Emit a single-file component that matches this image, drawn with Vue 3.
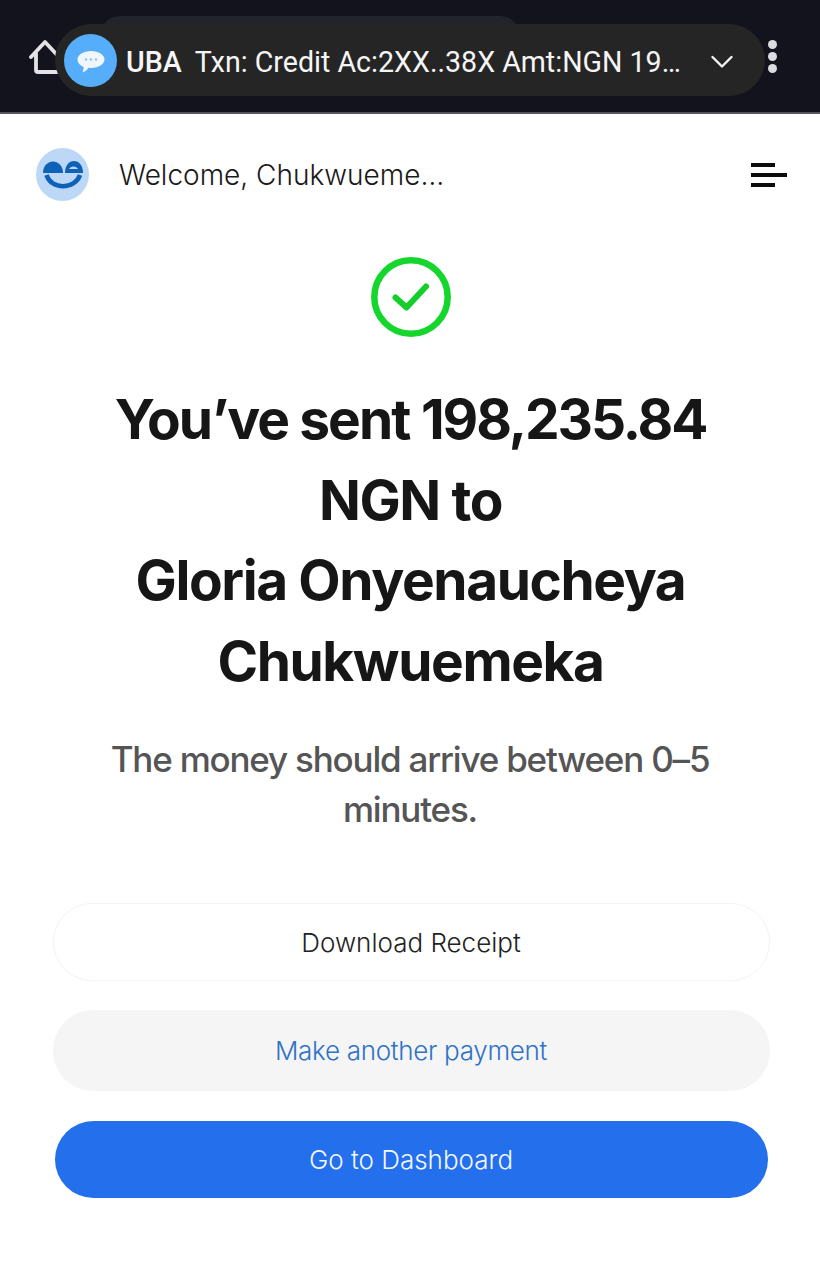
<template>
  <div class="screen">
    <!-- status bar, with the notification pill over it -->
    <div class="status-bar">
      <div class="pill-behind"></div>
      <svg class="home-icon" viewBox="0 0 32 36" width="32" height="36">
        <path d="M2 19 L16 4 L30 19 M7 15 V32 Q7 34 9 34 H30" fill="none" stroke="#e4e2e8" stroke-width="3.800" stroke-linecap="round" stroke-linejoin="round" />
      </svg>
      <div class="notif">
        <div class="notif-icon">
          <svg viewBox="0 0 30 30" width="30" height="30">
            <path d="M15 6 C22.500 6 28.500 9.800 28.500 14.500 C28.500 19.200 22.500 23 15 23 C14 23 13.200 22.900 12.400 22.800 C11 25.300 8.800 27 6.300 27.500 C7.300 25.800 7.700 23.900 7.500 21.800 C3.900 20.300 1.500 17.600 1.500 14.500 C1.500 9.800 7.500 6 15 6 Z" fill="#f1f6fb" />
            <circle cx="10" cy="14.500" r="1.200" fill="#8fc4f2" />
            <circle cx="15" cy="14.500" r="1.200" fill="#8fc4f2" />
            <circle cx="20" cy="14.500" r="1.200" fill="#8fc4f2" />
          </svg>
        </div>
        <span class="notif-sender">UBA</span>
        <span class="notif-text">Txn: Credit Ac:2XX..38X Amt:NGN 19…</span>
        <svg class="chevron" viewBox="0 0 22 14" width="22" height="14">
          <path d="M1.500 2 L11 11.500 L20.500 2" fill="none" stroke="#f2f2f2" stroke-width="2.400" stroke-linecap="round" stroke-linejoin="round" />
        </svg>
      </div>
      <div class="dots">
        <span></span>
        <span></span>
        <span></span>
      </div>
    </div>

    <div class="header">
      <div class="user">
        <div class="avatar">
          <svg viewBox="0 0 53 53" width="53" height="53">
            <path d="M7 25 C7 17.500 12 13.500 17 13.500 C22 13.500 27 17.500 27 25 Z" fill="#0d62b8" />
            <path d="M29 25 C29 17.500 33 13 38 13 C43 13 47 17.500 47 25 Z" fill="#0d62b8" />
            <path d="M33 21 C34.500 17.500 40.500 17.500 42 21 Z" fill="#bcd8f6" />
            <path d="M10.500 27 C15 42 39 42 44 27" fill="none" stroke="#0d62b8" stroke-width="4.500" />
          </svg>
        </div>
        <span class="welcome">Welcome, Chukwueme…</span>
      </div>
      <div class="menu">
        <span class="short"></span>
        <span class="long"></span>
        <span class="short"></span>
      </div>
    </div>

    <div class="content">
      <svg class="check" viewBox="0 0 80 80" width="80" height="80">
        <circle cx="40" cy="40" r="36.700" fill="none" stroke="#14d62c" stroke-width="6.500" />
        <path d="M24.500 40.500 L35.500 50.500 L55 29.500" fill="none" stroke="#14cf2b" stroke-width="6" stroke-linecap="round" stroke-linejoin="round" />
      </svg>

      <h1 class="title">
        <div><span class="sent">You’ve sent</span> <span class="amount">198,235.84</span></div>
        <div>NGN to</div>
        <div>Gloria Onyenaucheya</div>
        <div>Chukwuemeka</div>
      </h1>

      <p class="subtitle">
        <span>The money should arrive between 0–5</span>
        <span>minutes.</span>
      </p>

      <div class="actions">
        <button class="btn btn-outline">Download Receipt</button>
        <button class="btn btn-soft">Make another payment</button>
        <button class="btn btn-primary">Go to Dashboard</button>
      </div>
    </div>
  </div>
</template>

<script setup>
</script>

<style scoped>
.screen {
  position: relative;
  width: 820px;
  height: 1280px;
  overflow: hidden;
  background: #fff;
  font-family: Inter, "Liberation Sans", sans-serif;
  color: #141414;
}

.status-bar {
  position: relative;
  height: 112px;
  background: #12131c;
  border-bottom: 2px solid #55565c;
}

.pill-behind {
  position: absolute;
  left: 100px;
  top: 16px;
  width: 420px;
  height: 40px;
  border-radius: 20px;
  background: #23232e;
}

.home-icon {
  position: absolute;
  left: 29px;
  top: 38px;
}

.notif {
  position: absolute;
  left: 55px;
  top: 24px;
  width: 710px;
  height: 72px;
  border-radius: 36px;
  background: #252525;
  display: flex;
  align-items: center;
  font-family: Roboto, "Liberation Sans", sans-serif;
  color: #f5f5f5;
  font-size: 28.600px;
}

.notif-icon {
  width: 53px;
  height: 53px;
  margin-left: 9px;
  border-radius: 50%;
  background: #56adf9;
  display: flex;
  align-items: center;
  justify-content: center;
  flex-shrink: 0;
}

.notif-sender {
  margin-left: 9px;
  padding-top: 4px;
  font-weight: 500;
}

.notif-text {
  margin-left: 13px;
  padding-top: 4px;
  white-space: nowrap;
}

.chevron {
  position: absolute;
  left: 656px;
  top: 31px;
}

.dots {
  position: absolute;
  left: 768px;
  top: 40px;
  display: flex;
  flex-direction: column;
  gap: 3px;
}

.dots span {
  width: 9px;
  height: 9px;
  border-radius: 50%;
  background: #dcdbe2;
}

.header {
  display: flex;
  align-items: center;
  justify-content: space-between;
  padding: 34px 33px 0 36px;
}

.user {
  display: flex;
  align-items: center;
  gap: 30px;
}

.avatar {
  width: 53px;
  height: 53px;
  border-radius: 50%;
  background: #bcd8f6;
}

.welcome {
  font-size: 28px;
  font-weight: 350;
  color: #1a1a1a;
  white-space: nowrap;
}

.menu {
  display: flex;
  flex-direction: column;
  align-items: flex-start;
  gap: 6px;
  width: 36px;
}

.menu span {
  height: 4px;
  background: #0c0c0c;
}

.menu .short {
  width: 24px;
}

.menu .long {
  width: 36px;
}

.content {
  display: flex;
  flex-direction: column;
  align-items: center;
  padding-top: 56px;
}

.check {
  display: block;
  margin-left: 2px;
}

.title {
  margin: 42px 0 0;
  padding-left: 1px;
  font-size: 55px;
  line-height: 80.500px;
  font-weight: 650;
  letter-spacing: -1.400px;
  text-align: center;
  color: #161616;
}

.sent {
  letter-spacing: -1.950px;
}

.amount {
  letter-spacing: -2.100px;
}

.subtitle {
  margin: 33px 0 0;
  font-size: 35px;
  line-height: 50px;
  font-weight: 500;
  letter-spacing: -1.200px;
  color: #555;
  text-align: center;
  display: flex;
  flex-direction: column;
}

.actions {
  margin-top: 69px;
  padding-left: 2px;
  display: flex;
  flex-direction: column;
  align-items: center;
}

.btn {
  display: block;
  font-family: inherit;
  font-size: 26px;
  font-weight: 350;
  border: none;
  border-radius: 40px;
}

.btn-outline {
  width: 717px;
  height: 78px;
  background: #fff;
  border: 1px solid #f3f3f3;
  color: #222;
}

.btn-soft {
  width: 717px;
  height: 81px;
  margin-top: 29px;
  background: #f5f5f5;
  color: #2f72c6;
  letter-spacing: -0.300px;
}

.btn-primary {
  width: 713px;
  height: 77px;
  margin-top: 30px;
  background: #236fec;
  color: #f2f6ff;
}
</style>
